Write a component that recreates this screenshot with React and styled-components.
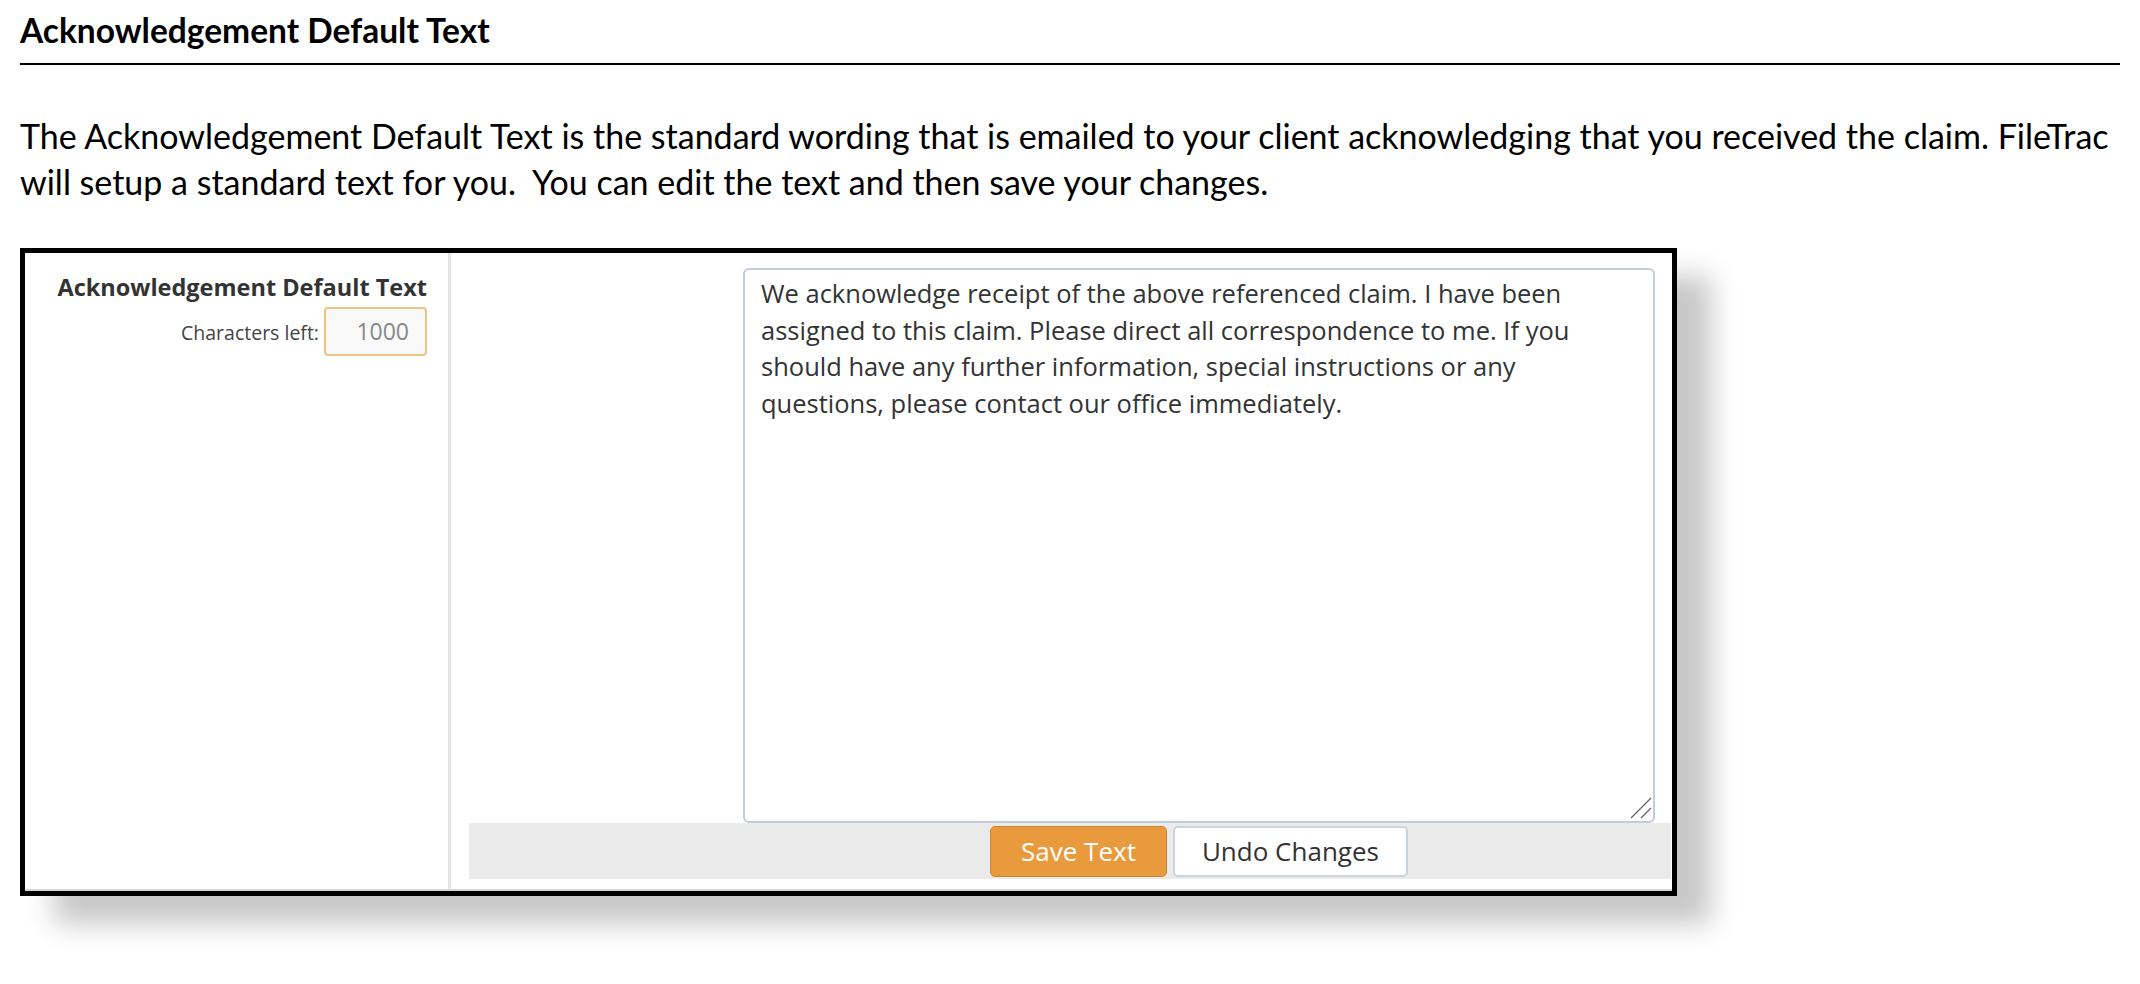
import React from "react";
import styled, { createGlobalStyle } from "styled-components";

const GlobalStyle = createGlobalStyle`
  html, body {
    margin: 0;
    padding: 0;
    background: #fff;
  }
  body {
    font-family: "Lato", "Liberation Sans", sans-serif;
    color: #000;
  }
`;

const Page = styled.div`
  width: 2140px;
  min-height: 984px;
  box-sizing: border-box;
  padding: 10px 20px 60px;
`;

const Heading = styled.h1`
  margin: 0;
  padding-bottom: 13px;
  border-bottom: 2px solid #000;
  font-size: 33.5px;
  font-weight: 700;
  line-height: 40px;
`;

const Intro = styled.p`
  margin: 48px 0 0;
  font-size: 34px;
  line-height: 46px;
  white-space: pre;
`;

const Panel = styled.section`
  margin-top: 43px;
  width: 1657px;
  height: 648px;
  box-sizing: border-box;
  border: 5px solid #000;
  background: #fff;
  box-shadow: 34px 28px 26px rgba(0, 0, 0, 0.22);
  font-family: "Open Sans", "Liberation Sans", sans-serif;
`;

const Form = styled.div`
  height: 100%;
  box-sizing: border-box;
  display: grid;
  grid-template-columns: 423px 3px 1fr;
  border-bottom: 2px solid #d6d6d6;
`;

const LabelCell = styled.div`
  padding: 19px 21px 0 0;
  text-align: right;
`;

const FieldLabel = styled.div`
  font-size: 23.5px;
  font-weight: 700;
  line-height: 30px;
  color: #333;
`;

const CounterRow = styled.div`
  margin-top: 5px;
  display: flex;
  justify-content: flex-end;
  align-items: baseline;
  gap: 5px;
`;

const CounterLabel = styled.span`
  font-size: 19.5px;
  color: #444;
`;

const Counter = styled.div`
  width: 103px;
  height: 49px;
  box-sizing: border-box;
  padding-right: 16px;
  border: 2px solid #f0c283;
  border-radius: 4px;
  background: #f9f9f9;
  color: #888;
  font-size: 23px;
  line-height: 45px;
  text-align: right;
`;

const Divider = styled.div`
  background: #e4e4e4;
`;

const FieldCell = styled.div`
  padding: 15px 1px 10px 18px;
  display: grid;
  grid-template-columns: 274px 912px 1fr;
  grid-template-rows: 555px 56px;
`;

const EditorWrap = styled.div`
  grid-column: 2;
  grid-row: 1;
  position: relative;
`;

const Editor = styled.textarea`
  display: block;
  margin: 0;
  box-sizing: border-box;
  width: 100%;
  height: 100%;
  padding: 5px 16px;
  border: 2px solid #c3ccd9;
  border-radius: 6px;
  font-family: "Open Sans", "Liberation Sans", sans-serif;
  font-size: 25.5px;
  line-height: 36.5px;
  color: #333;
  resize: none;
  outline: none;
`;

const Grip = styled.svg`
  position: absolute;
  right: 3px;
  bottom: 4px;
  width: 22px;
  height: 22px;
  pointer-events: none;
`;

const ButtonBar = styled.div`
  grid-column: 1 / -1;
  grid-row: 2;
  display: grid;
  grid-template-columns: 274px 912px 1fr;
  background: #ebebeb;
`;

const Buttons = styled.div`
  grid-column: 2;
  display: flex;
  justify-content: center;
  align-items: center;
  gap: 6px;
`;

const Button = styled.button`
  height: 51px;
  box-sizing: border-box;
  padding: 0 ${(p) => (p.$primary ? "30px" : "27px")};
  border: ${(p) => (p.$primary ? "1px solid #cf8531" : "2px solid #cbd3df")};
  border-radius: 5px;
  background: ${(p) => (p.$primary ? "#e99a3c" : "#fff")};
  color: ${(p) => (p.$primary ? "#fff" : "#333")};
  font-family: "Open Sans", "Liberation Sans", sans-serif;
  font-size: 26px;
  cursor: pointer;
`;

const defaultText =
  "We acknowledge receipt of the above referenced claim. I have been assigned to this claim. Please direct all correspondence to me. If you should have any further information, special instructions or any questions, please contact our office immediately.";

export default function App() {
  return (
    <>
      <GlobalStyle />
      <Page>
        <Heading>Acknowledgement Default Text</Heading>
        <Intro>
          {"The Acknowledgement Default Text is the standard wording that is emailed to your client acknowledging that you received the claim. FileTrac\nwill setup a standard text for you.  You can edit the text and then save your changes."}
        </Intro>

        <Panel>
          <Form>
            <LabelCell>
              <FieldLabel>Acknowledgement Default Text</FieldLabel>
              <CounterRow>
                <CounterLabel>Characters left:</CounterLabel>
                <Counter>1000</Counter>
              </CounterRow>
            </LabelCell>
            <Divider />
            <FieldCell>
              <EditorWrap>
                <Editor defaultValue={defaultText} />
                <Grip viewBox="0 0 22 22">
                  <line x1="1" y1="21" x2="21" y2="1" stroke="#666" strokeWidth="1.3" />
                  <line x1="11" y1="21" x2="21" y2="11" stroke="#666" strokeWidth="1.3" />
                </Grip>
              </EditorWrap>
              <ButtonBar>
                <Buttons>
                  <Button $primary>Save Text</Button>
                  <Button>Undo Changes</Button>
                </Buttons>
              </ButtonBar>
            </FieldCell>
          </Form>
        </Panel>
      </Page>
    </>
  );
}
